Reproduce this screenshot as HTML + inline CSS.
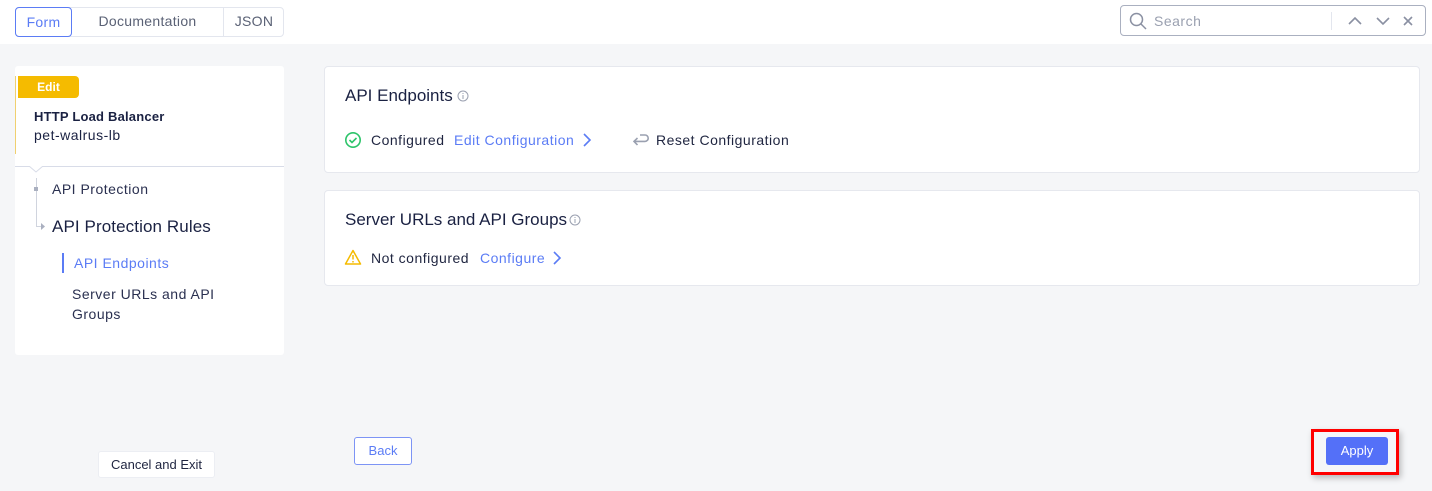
<!DOCTYPE html>
<html><head><meta charset="utf-8"><style>
*{box-sizing:border-box;margin:0;padding:0}
body{width:1432px;height:491px;overflow:hidden;background:#f5f6f8;font-family:"Liberation Sans",sans-serif;color:#1f2540;position:relative}
.abs{position:absolute}
.top{left:0;top:0;width:1432px;height:44px;background:#fff}
.tabs{left:15px;top:7px;height:30px;border:1px solid #e3e6ee;border-radius:4px;width:269px;background:#fff}
.tab{position:absolute;top:-1px;height:30px;line-height:28px;font-size:14px;color:#5a6175;text-align:center;letter-spacing:0.3px}
.card{background:#fff;border:1px solid #e6e8ee;border-radius:4px}
.t{position:absolute;white-space:nowrap}
.s{letter-spacing:0.5px}
.blue{color:#5b7cf5}
</style></head><body>
<div class="abs top"></div>
<div class="abs tabs">
 <div class="tab" style="left:-1px;width:57px;border:1px solid #5b7cf5;border-radius:4px;color:#5b7cf5">Form</div>
 <div class="tab" style="left:56px;width:152px;border-right:1px solid #e3e6ee">Documentation</div>
 <div class="tab" style="left:208px;width:60px">JSON</div>
</div>
<div class="abs" style="left:1120px;top:5px;width:306px;height:31px;border:1px solid #aab0c0;border-radius:4px;background:#fff">
 <svg class="abs" style="left:8px;top:6px" width="18" height="18" viewBox="0 0 18 18"><circle cx="7.5" cy="7.5" r="6" fill="none" stroke="#8a90a2" stroke-width="1.5"/><path d="M12 12l5 5" stroke="#8a90a2" stroke-width="1.5"/></svg>
 <div class="t s" style="left:33px;top:7px;font-size:14px;color:#9aa0b0">Search</div>
 <div class="abs" style="left:210px;top:6px;width:1px;height:18px;background:#e3e6ee"></div>
 <svg class="abs" style="left:226px;top:8px" width="80" height="14" viewBox="0 0 80 14"><path d="M2 10l6-6 6 6M30 4l6 6 6-6M57 3l8 8M65 3l-8 8" fill="none" stroke="#8a90a2" stroke-width="1.6"/></svg>
</div>

<div class="abs card" style="left:15px;top:66px;width:269px;height:289px;border:none;border-radius:3px"></div>
<div class="abs" style="left:15px;top:76px;width:1px;height:78px;background:#f0d070"></div>
<div class="abs" style="left:18px;top:76px;width:61px;height:22px;background:#f5bb00;border-radius:0 4px 4px 0;color:#fff;font-size:12px;font-weight:bold;text-align:center;line-height:22px">Edit</div>
<div class="t" style="left:34px;top:109px;font-size:13px;font-weight:bold;color:#1a2142;letter-spacing:0.2px">HTTP Load Balancer</div>
<div class="t s" style="left:34px;top:127px;font-size:14px;color:#1a2142">pet-walrus-lb</div>
<div class="abs" style="left:15px;top:166px;width:269px;height:1px;background:#d8dce8"></div>
<svg class="abs" style="left:28px;top:166px" width="16" height="8"><path d="M1 0l7 6 7-6" fill="#fff" stroke="#d8dce8"/></svg>
<div class="abs" style="left:36px;top:178px;width:1px;height:49px;background:#d0d4de"></div>
<div class="abs" style="left:34px;top:187px;width:4px;height:4px;background:#aab0c0"></div>
<div class="abs" style="left:37px;top:226px;width:5px;height:1px;background:#d0d4de"></div>
<svg class="abs" style="left:41px;top:223px" width="5" height="7"><path d="M0 0l4 3.5L0 7z" fill="#aab0c0"/></svg>
<div class="t s" style="left:52px;top:181px;font-size:14px;color:#2a3050">API Protection</div>
<div class="t" style="left:52px;top:217px;font-size:17px;color:#1a2142;letter-spacing:0.1px">API Protection Rules</div>
<div class="abs" style="left:62px;top:253px;width:2px;height:20px;background:#5b7cf5"></div>
<div class="t blue s" style="left:74px;top:255px;font-size:14px">API Endpoints</div>
<div class="t s" style="left:72px;top:284px;font-size:14px;color:#2a3050;line-height:20px">Server URLs and API<br>Groups</div>

<div class="abs card" style="left:324px;top:66px;width:1096px;height:107px"></div>
<div class="t" style="left:345px;top:86px;font-size:17px;color:#1a2142">API Endpoints</div>
<svg class="abs" style="left:457px;top:90px" width="12" height="12"><circle cx="6" cy="6" r="5" fill="none" stroke="#9aa0b0"/><path d="M6 5v4M6 3v1" stroke="#9aa0b0"/></svg>
<svg class="abs" style="left:344px;top:131px" width="18" height="18"><circle cx="9" cy="9" r="7.2" fill="none" stroke="#2dc46a" stroke-width="1.6"/><path d="M5.5 9l2.5 2.5 4.5-4.5" fill="none" stroke="#2dc46a" stroke-width="1.6"/></svg>
<div class="t s" style="left:371px;top:132px;font-size:14px;color:#1f2540">Configured</div>
<div class="t blue s" style="left:454px;top:132px;font-size:14px">Edit Configuration</div>
<svg class="abs" style="left:582px;top:133px" width="10" height="14"><path d="M2 1l6 6-6 6" fill="none" stroke="#5b7cf5" stroke-width="1.6"/></svg>
<svg class="abs" style="left:631px;top:131px" width="19" height="18"><path d="M9 4h5a3.2 3.2 0 0 1 0 6.4H3M6.5 7L3 10.4 6.5 14" fill="none" stroke="#9aa0b0" stroke-width="1.6"/></svg>
<div class="t s" style="left:656px;top:132px;font-size:14px;color:#1f2540">Reset Configuration</div>

<div class="abs card" style="left:324px;top:190px;width:1096px;height:96px"></div>
<div class="t" style="left:345px;top:210px;font-size:17px;color:#1a2142">Server URLs and API Groups</div>
<svg class="abs" style="left:569px;top:214px" width="12" height="12"><circle cx="6" cy="6" r="5" fill="none" stroke="#9aa0b0"/><path d="M6 5v4M6 3v1" stroke="#9aa0b0"/></svg>
<svg class="abs" style="left:344px;top:249px" width="18" height="17"><path d="M9 1.5L16.5 15H1.5z" fill="none" stroke="#f5bb00" stroke-width="1.5" stroke-linejoin="round"/><path d="M9 6v4.5M9 12v1.5" stroke="#f5bb00" stroke-width="1.5"/></svg>
<div class="t s" style="left:371px;top:250px;font-size:14px;color:#1f2540">Not configured</div>
<div class="t blue s" style="left:480px;top:250px;font-size:14px">Configure</div>
<svg class="abs" style="left:552px;top:251px" width="10" height="14"><path d="M2 1l6 6-6 6" fill="none" stroke="#5b7cf5" stroke-width="1.6"/></svg>

<div class="abs" style="left:98px;top:451px;width:117px;height:27px;background:#fff;border:1px solid #eceef3;border-radius:3px;font-size:13px;text-align:center;line-height:25px;color:#1f2540">Cancel and Exit</div>
<div class="abs" style="left:354px;top:437px;width:58px;height:28px;background:#fff;border:1px solid #7d94f5;border-radius:3px;font-size:13px;text-align:center;line-height:26px;color:#5b7cf5">Back</div>
<div class="abs" style="left:1311px;top:429px;width:88px;height:46px;border:3px solid #f00;box-shadow:2px 3px 6px rgba(0,0,0,.25)"></div>
<div class="abs" style="left:1326px;top:437px;width:62px;height:28px;background:#5470f8;border-radius:3px;font-size:13px;text-align:center;line-height:28px;color:#fff">Apply</div>
</body></html>
